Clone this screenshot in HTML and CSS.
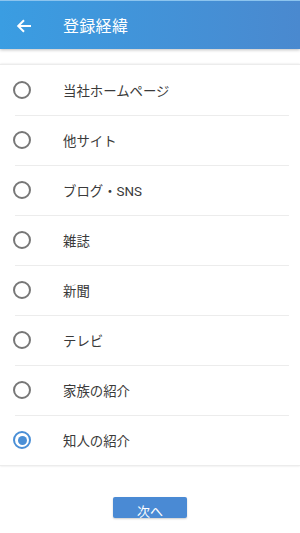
FILE: index.html
```html
<!DOCTYPE html>
<html lang="ja">
<head>
<meta charset="utf-8">
<link rel="stylesheet" href="styles.css">
</head>
<body>
<header class="appbar">
  <svg class="back" width="16" height="16" viewBox="0 0 16 16"><path d="M15 8H2.5M8 2.2L2.2 8 8 13.8" fill="none" stroke="#fff" stroke-width="2"/></svg>
  <h1 class="title">登録経緯</h1>
</header>
<main class="card">
  <ul class="list">
    <li class="row"><span class="radio"></span><span class="label">当社ホームページ</span></li>
    <li class="row"><span class="radio"></span><span class="label">他サイト</span></li>
    <li class="row"><span class="radio"></span><span class="label">ブログ・SNS</span></li>
    <li class="row"><span class="radio"></span><span class="label">雑誌</span></li>
    <li class="row"><span class="radio"></span><span class="label">新聞</span></li>
    <li class="row"><span class="radio"></span><span class="label">テレビ</span></li>
    <li class="row"><span class="radio"></span><span class="label">家族の紹介</span></li>
    <li class="row"><span class="radio checked"></span><span class="label">知人の紹介</span></li>
  </ul>
</main>
<div class="actions">
  <button class="next">次へ</button>
</div>
</body>
</html>
```
FILE: styles.css
```css
html, body {
  margin: 0;
  padding: 0;
  background: #fff;
  font-family: Roboto, "Noto Sans CJK JP", sans-serif;
  height: 533px;
  overflow: hidden;
}
.appbar {
  height: 49px;
  display: flex;
  align-items: center;
  background: linear-gradient(to right, #3a9de2, #4a89cf);
  box-shadow: 0 1px 3px rgba(0,0,0,0.25);
  border-top: 1px solid #8cc4ee;
  box-sizing: border-box;
}
.back {
  margin-left: 16px;
  margin-top: 1px;
}
.title {
  margin: 0 0 0 31px;
  font-size: 16px;
  font-weight: 400;
  color: #fff;
  letter-spacing: 0.3px;
}
.card {
  margin-top: 15px;
  box-shadow: 0 0 2px rgba(0,0,0,0.12);
  border-top: 1px solid #ececec;
  border-bottom: 1px solid #ececec;
}
.list {
  list-style: none;
  margin: 0;
  padding: 0;
}
.row {
  height: 50px;
  display: flex;
  align-items: center;
  position: relative;
}
.row + .row::before {
  content: "";
  position: absolute;
  top: 0;
  left: 15px;
  right: 11px;
  height: 1px;
  background: #ececec;
}
.radio {
  width: 18px;
  height: 18px;
  margin-left: 13px;
  border: 2px solid #777;
  border-radius: 50%;
  box-sizing: border-box;
  flex-shrink: 0;
}
.radio.checked {
  border-color: #4a8fd6;
  display: flex;
  align-items: center;
  justify-content: center;
}
.radio.checked::after {
  content: "";
  width: 9px;
  height: 9px;
  border-radius: 50%;
  background: #4a8fd6;
}
.label {
  margin-left: 32px;
  font-size: 13.4px;
  color: #3a3a3a;
}
.actions {
  display: flex;
  justify-content: center;
  padding-top: 31px;
}
.next {
  width: 74px;
  height: 21px;
  border: none;
  border-radius: 2px;
  background: #4a8ad4;
  color: #fff;
  font-family: Roboto, "Noto Sans CJK JP", sans-serif;
  font-size: 13px;
  padding: 8px 0 0;
  line-height: 14px;
  overflow: hidden;
  box-shadow: 0 1px 2px rgba(0,0,0,0.2);
}
```
